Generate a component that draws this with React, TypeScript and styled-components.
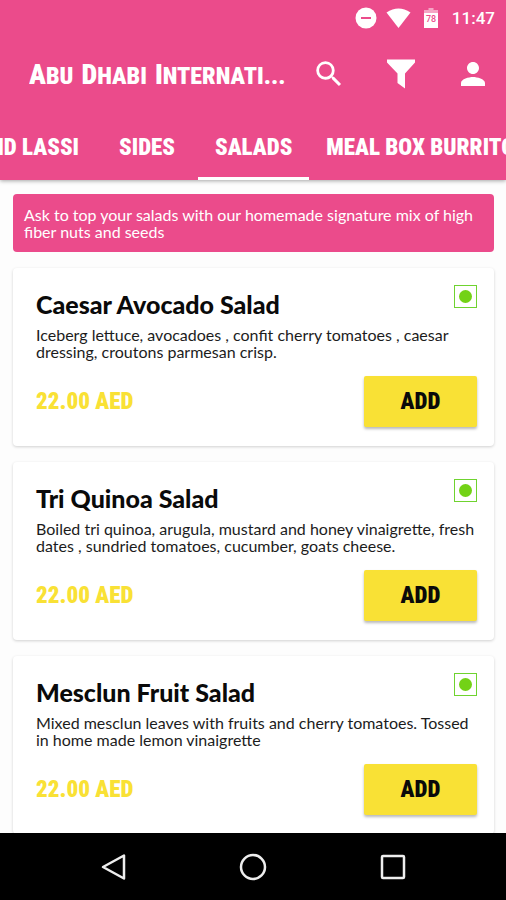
import React from "react";
import styled, { createGlobalStyle } from "styled-components";

const pink = "#eb4b8b";
const yellow = "#f9e135";
const display = '"Roboto Condensed", "Liberation Sans Narrow", "Liberation Sans", sans-serif';
const body = 'Lato, "Open Sans", sans-serif';

const GlobalStyle = createGlobalStyle`
  *, *::before, *::after { box-sizing: border-box; }
  body { margin: 0; background: #fdfdfd; }
  button { border: 0; padding: 0; background: none; color: inherit; cursor: pointer; }
  svg { display: block; }
`;

const Screen = styled.div`
  display: flex;
  flex-direction: column;
  height: 100vh;
  overflow: hidden;
  background: #fdfdfd;
  font-family: ${body};
`;

const Header = styled.header`
  flex: none;
  background: ${pink};
  color: #fff;
  box-shadow: 0 1px 4px rgba(0, 0, 0, 0.35);
`;

const StatusBar = styled.div`
  display: flex;
  align-items: center;
  justify-content: flex-end;
  height: 36px;
  padding-right: 11px;
`;

const StatusIcons = styled.div`
  display: flex;
  align-items: center;
  gap: 9px;
`;

const Clock = styled.time`
  margin-left: 14px;
  font: 500 17px/20px Roboto, sans-serif;
`;

const Toolbar = styled.div`
  display: flex;
  align-items: center;
  height: 76px;
  padding: 0 9px 0 29px;
`;

const Title = styled.h1`
  flex: 1;
  display: flex;
  align-items: baseline;
  gap: 8px;
  min-width: 0;
  margin: 0;
  padding-top: 2px;
  overflow: hidden;
  white-space: nowrap;
  font: 900 24px/36px ${display};
  text-transform: uppercase;
`;

const Word = styled.span`
  display: block;
  &::first-letter { font-size: 28px; }
`;

const Actions = styled.div`
  display: flex;
  gap: 24px;
`;

const IconButton = styled.button`
  display: grid;
  place-items: center;
  width: 48px;
  height: 48px;
`;

const Tabs = styled.nav`
  display: flex;
  height: 68px;
  overflow: hidden;
`;

const Tab = styled.button<{ $active?: boolean; $cut?: boolean }>`
  flex: none;
  display: flex;
  align-items: center;
  justify-content: ${(p) => (p.$cut ? "flex-end" : "center")};
  width: ${(p) => (p.$cut ? "96px" : "auto")};
  min-width: ${(p) => (p.$cut ? "0" : "102px")};
  padding: 6px 17px 0;
  overflow: hidden;
  border-bottom: 3px solid ${(p) => (p.$active ? "#fff" : "transparent")};
  font: 900 23px/30px ${display};
  white-space: nowrap;
`;

const Content = styled.main`
  flex: 1;
  min-height: 0;
  overflow: hidden;
  display: flex;
  flex-direction: column;
  gap: 16px;
  padding: 14px 12px 0 13px;
`;

const Banner = styled.p`
  flex: none;
  margin: 0;
  padding: 12px 11px;
  border-radius: 4px;
  background: ${pink};
  color: #fff;
  font-size: 16px;
  line-height: 17px;
`;

const Card = styled.article`
  flex: none;
  padding: 17px 17px 19px 23px;
  border-radius: 4px;
  background: #fff;
  box-shadow: 0 1px 3px rgba(0, 0, 0, 0.18);
`;

const CardHead = styled.div`
  display: flex;
  justify-content: space-between;
  align-items: flex-start;
`;

const Name = styled.h2`
  margin: 5px 0 0;
  font-size: 25px;
  font-weight: 900;
  line-height: 28px;
  color: #0a0a0a;
`;

const VegMark = styled.span`
  display: grid;
  place-items: center;
  width: 23px;
  height: 23px;
  border: 1px solid #6fd32f;
  &::before {
    content: "";
    width: 13px;
    height: 13px;
    border-radius: 50%;
    background: #73d216;
  }
`;

const Description = styled.p`
  margin: 8px 0 0;
  font-size: 16px;
  line-height: 17px;
  color: #1c1c1c;
  white-space: nowrap;
`;

const CardFoot = styled.div`
  display: flex;
  align-items: center;
  justify-content: space-between;
  margin-top: 16px;
`;

const Price = styled.span`
  font: 900 23px/30px ${display};
  color: ${yellow};
`;

const AddButton = styled.button`
  width: 113px;
  height: 51px;
  border-radius: 2px;
  background: ${yellow};
  color: #0a0a0a;
  font: 900 23px/30px ${display};
  box-shadow: 0 2px 3px rgba(0, 0, 0, 0.28);
`;

const NavBar = styled.nav`
  flex: none;
  display: flex;
  justify-content: center;
  gap: 92px;
  height: 67px;
  background: #000;
  color: #eee;
  align-items: center;
`;

const salads = [
  {
    name: "Caesar Avocado Salad",
    lines: ["Iceberg lettuce, avocadoes , confit cherry tomatoes , caesar", "dressing, croutons parmesan crisp."],
  },
  {
    name: "Tri Quinoa Salad",
    lines: ["Boiled tri quinoa, arugula, mustard and honey vinaigrette, fresh", "dates , sundried tomatoes, cucumber, goats cheese."],
  },
  {
    name: "Mesclun Fruit Salad",
    lines: ["Mixed mesclun leaves with fruits and cherry tomatoes. Tossed", "in home made lemon vinaigrette"],
  },
];

export default function App() {
  return (
    <>
      <GlobalStyle />
      <Screen>
        <Header>
          <StatusBar>
            <StatusIcons>
              <svg width="22" height="22" viewBox="0 0 22 22" aria-hidden="true">
                <circle cx="11" cy="11" r="10.5" fill="#fff" />
                <path d="M6 11h10" stroke={pink} strokeWidth="2" />
              </svg>
              <svg width="25" height="20" viewBox="0 0 25 20" fill="#fff" aria-hidden="true">
                <path d="M.5 4.600Q12.500-3.600 24.500 4.600L12.500 20Z" />
              </svg>
              <svg width="18" height="20" viewBox="4 0 18 20" aria-hidden="true">
                <path d="M12.500 0h5v2h-5zM8 2h14v3H8z" fill="#fff" opacity=".5" />
                <path d="M8 5h14v15H8z" fill="#fff" />
                <text x="15" y="14" textAnchor="middle" fontFamily="Roboto, sans-serif" fontSize="9" fontWeight="500" fill={pink}>
                  78
                </text>
              </svg>
            </StatusIcons>
            <Clock>11:47</Clock>
          </StatusBar>
          <Toolbar>
            <Title>
              <Word>Abu</Word>
              <Word>Dhabi</Word>
              <Word>Internati...</Word>
            </Title>
            <Actions>
              <IconButton aria-label="Search">
                <svg width="34" height="34" viewBox="0 0 24 24" fill="currentColor">
                  <path d="M15.500 14h-.79l-.28-.27A6.470 6.470 0 0 0 16 9.500 6.500 6.500 0 1 0 9.500 16c1.610 0 3.090-.59 4.230-1.570l.27.28v.79l5 4.990L20.490 19l-4.990-5zm-6 0C7.010 14 5 11.990 5 9.500S7.010 5 9.500 5 14 7.010 14 9.500 11.990 14 9.500 14z" />
                </svg>
              </IconButton>
              <IconButton aria-label="Filter">
                <svg width="30" height="30" viewBox="0 0 30 30" fill="currentColor">
                  <path d="M1 .5h28v3L19 14.500V29.500L11.500 24V14.500L1 3.500Z" />
                </svg>
              </IconButton>
              <IconButton aria-label="Account">
                <svg width="36" height="36" viewBox="0 0 24 24" fill="currentColor">
                  <path d="M12 12c2.210 0 4-1.790 4-4s-1.790-4-4-4-4 1.790-4 4 1.790 4 4 4zm0 2c-2.670 0-8 1.340-8 4v2h16v-2c0-2.660-5.330-4-8-4z" />
                </svg>
              </IconButton>
            </Actions>
          </Toolbar>
          <Tabs aria-label="Menu sections">
            <Tab $cut>AND LASSI</Tab>
            <Tab>SIDES</Tab>
            <Tab $active aria-current="true">SALADS</Tab>
            <Tab>MEAL BOX BURRITOS</Tab>
          </Tabs>
        </Header>
        <Content>
          <Banner>
            Ask to top your salads with our homemade signature mix of high
            <br />
            fiber nuts and seeds
          </Banner>
          {salads.map((s) => (
            <Card key={s.name}>
              <CardHead>
                <Name>{s.name}</Name>
                <VegMark role="img" aria-label="Vegetarian" />
              </CardHead>
              <Description>
                {s.lines[0]}
                <br />
                {s.lines[1]}
              </Description>
              <CardFoot>
                <Price>22.00 AED</Price>
                <AddButton>ADD</AddButton>
              </CardFoot>
            </Card>
          ))}
        </Content>
        <NavBar aria-label="System">
          <IconButton aria-label="Back">
            <svg width="28" height="28" viewBox="0 0 28 28" fill="none" stroke="currentColor" strokeWidth="2.500">
              <path d="M25 2.500v23L4 14Z" strokeLinejoin="round" />
            </svg>
          </IconButton>
          <IconButton aria-label="Home">
            <svg width="28" height="28" viewBox="0 0 28 28" fill="none" stroke="currentColor" strokeWidth="2.500">
              <circle cx="14" cy="14" r="12" />
            </svg>
          </IconButton>
          <IconButton aria-label="Recent apps">
            <svg width="28" height="28" viewBox="0 0 28 28" fill="none" stroke="currentColor" strokeWidth="2.500">
              <rect x="3" y="3" width="22" height="22" rx="1" />
            </svg>
          </IconButton>
        </NavBar>
      </Screen>
    </>
  );
}
